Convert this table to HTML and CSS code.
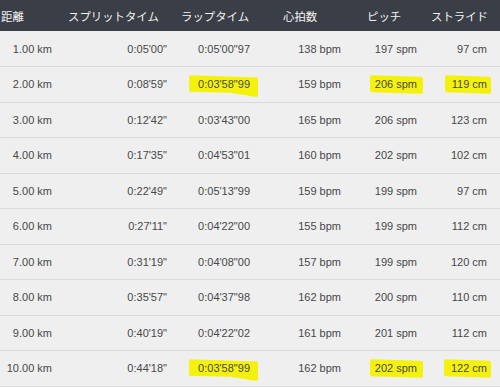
FILE: index.html
```html
<!DOCTYPE html>
<html lang="ja">
<head>
<meta charset="utf-8">
<link rel="stylesheet" href="styles.css">
</head>
<body>
<table class="laps">
  <colgroup>
    <col class="w1"><col class="w2"><col class="w3"><col class="w4"><col class="w5"><col class="w6">
  </colgroup>
  <thead>
    <tr>
      <th class="h1">距離</th>
      <th class="h2">スプリットタイム</th>
      <th class="h3">ラップタイム</th>
      <th class="h4">心拍数</th>
      <th class="h5">ピッチ</th>
      <th class="h6">ストライド</th>
    </tr>
  </thead>
  <tbody>
    <tr><td>1.00 km</td><td>0:05'00"</td><td>0:05'00"97</td><td>138 bpm</td><td>197 spm</td><td class="c6">97 cm</td></tr>
    <tr><td>2.00 km</td><td>0:08'59"</td><td><span class="mark mark-lap">0:03'58"99</span></td><td>159 bpm</td><td><span class="mark mark-pitch">206 spm</span></td><td class="c6"><span class="mark mark-stride">119 cm</span></td></tr>
    <tr><td>3.00 km</td><td>0:12'42"</td><td>0:03'43"00</td><td>165 bpm</td><td>206 spm</td><td class="c6">123 cm</td></tr>
    <tr><td>4.00 km</td><td>0:17'35"</td><td>0:04'53"01</td><td>160 bpm</td><td>202 spm</td><td class="c6">102 cm</td></tr>
    <tr><td>5.00 km</td><td>0:22'49"</td><td>0:05'13"99</td><td>159 bpm</td><td>199 spm</td><td class="c6">97 cm</td></tr>
    <tr><td>6.00 km</td><td>0:27'11"</td><td>0:04'22"00</td><td>155 bpm</td><td>199 spm</td><td class="c6">112 cm</td></tr>
    <tr><td>7.00 km</td><td>0:31'19"</td><td>0:04'08"00</td><td>157 bpm</td><td>199 spm</td><td class="c6">120 cm</td></tr>
    <tr><td>8.00 km</td><td>0:35'57"</td><td>0:04'37"98</td><td>162 bpm</td><td>200 spm</td><td class="c6">110 cm</td></tr>
    <tr><td>9.00 km</td><td>0:40'19"</td><td>0:04'22"02</td><td>161 bpm</td><td>201 spm</td><td class="c6">112 cm</td></tr>
    <tr><td>10.00 km</td><td>0:44'18"</td><td><span class="mark mark-lap">0:03'58"99</span></td><td>162 bpm</td><td><span class="mark mark-pitch">202 spm</span></td><td class="c6"><span class="mark mark-stride">122 cm</span></td></tr>
  </tbody>
</table>
</body>
</html>
```

FILE: styles.css
```css
html, body {
  margin: 0;
  padding: 0;
  background: #efefef;
}

.laps {
  width: 500px;
  border-collapse: collapse;
  table-layout: fixed;
  font-family: "Liberation Sans", Arial, "Noto Sans CJK JP", sans-serif;
}

.w1 { width: 60px; }
.w2 { width: 115px; }
.w3 { width: 83px; }
.w4 { width: 91px; }
.w5 { width: 76px; }
.w6 { width: 75px; }

.laps thead th {
  background: #3a3e46;
  color: #f4f4f4;
  font-family: "Noto Sans CJK JP", sans-serif;
  font-weight: normal;
  font-size: 11.4px;
  height: 31px;
  padding: 0;
  text-align: left;
  vertical-align: middle;
  white-space: nowrap;
}

.h1 { padding-left: 1px !important; }
.h2 { padding-left: 8px !important; }
.h3 { padding-left: 6px !important; }
.h4 { padding-left: 25px !important; }
.h5 { padding-left: 18px !important; }
.h6 { padding-left: 6px !important; }

.laps tbody td {
  height: 35.5px;
  padding: 0 8px 0 0;
  text-align: right;
  vertical-align: middle;
  font-size: 11px;
  color: #484848;
  background: #efefef;
  border-bottom: 1px solid #dadada;
  white-space: nowrap;
  box-sizing: border-box;
}

.laps tbody td.c6 { padding-right: 13px; }

.mark {
  position: relative;
  z-index: 0;
}

.mark::before {
  content: "";
  position: absolute;
  z-index: -1;
  background: #f4f20c;
  border-radius: 2px;
}

.mark-lap::before {
  left: -9px;
  right: -8px;
  top: -3px;
  bottom: -7px;
  clip-path: polygon(0 0, 100% 10%, 100% 100%, 60% 80%, 0 75%);
}

.mark-pitch::before {
  left: -5px;
  right: -6px;
  top: -2px;
  bottom: -3px;
  transform: skewY(2deg);
}

.mark-stride::before {
  left: -7px;
  right: -4px;
  top: -2px;
  bottom: -3px;
  transform: skewY(2deg);
}
```
